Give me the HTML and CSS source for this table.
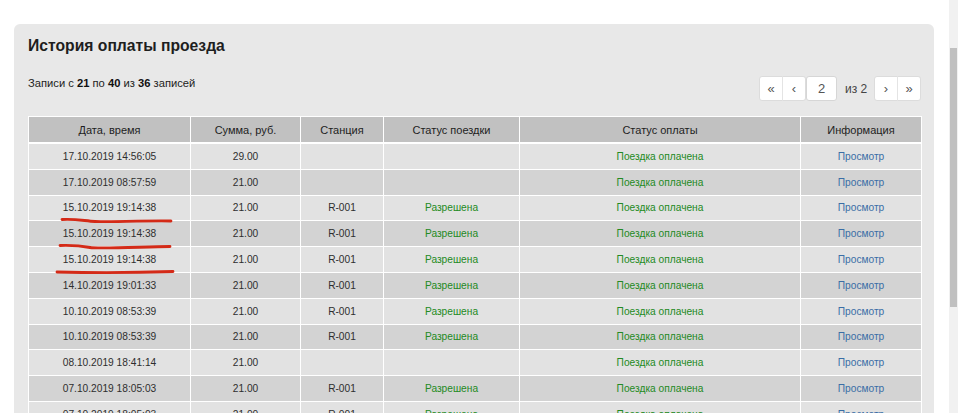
FILE: index.html
```html
<!DOCTYPE html>
<html lang="ru">
<head>
<meta charset="utf-8">
<title>История оплаты проезда</title>
<link rel="stylesheet" href="styles.css">
</head>
<body>
<div class="page">
  <div class="panel">
    <h2 class="title">История оплаты проезда</h2>
    <div class="toolbar">
      <div class="info">Записи с <b>21</b> по <b>40</b> из <b>36</b> записей</div>
      <div class="pager">
        <div class="group">
          <span class="pbtn">&laquo;</span><span class="pbtn">&lsaquo;</span>
        </div>
        <span class="pinput">2</span>
        <span class="pof">из 2</span>
        <div class="group">
          <span class="pbtn">&rsaquo;</span><span class="pbtn">&raquo;</span>
        </div>
      </div>
    </div>
    <table class="grid">
      <colgroup>
        <col class="c1"><col class="c2"><col class="c3"><col class="c4"><col class="c5"><col class="c6">
      </colgroup>
      <thead>
        <tr><th>Дата, время</th><th>Сумма, руб.</th><th>Станция</th><th>Статус поездки</th><th>Статус оплаты</th><th>Информация</th></tr>
      </thead>
      <tbody>
        <tr><td>17.10.2019 14:56:05</td><td>29.00</td><td></td><td></td><td class="ok">Поездка оплачена</td><td class="link">Просмотр</td></tr>
        <tr><td>17.10.2019 08:57:59</td><td>21.00</td><td></td><td></td><td class="ok">Поездка оплачена</td><td class="link">Просмотр</td></tr>
        <tr><td>15.10.2019 19:14:38</td><td>21.00</td><td>R-001</td><td class="ok">Разрешена</td><td class="ok">Поездка оплачена</td><td class="link">Просмотр</td></tr>
        <tr><td>15.10.2019 19:14:38</td><td>21.00</td><td>R-001</td><td class="ok">Разрешена</td><td class="ok">Поездка оплачена</td><td class="link">Просмотр</td></tr>
        <tr><td>15.10.2019 19:14:38</td><td>21.00</td><td>R-001</td><td class="ok">Разрешена</td><td class="ok">Поездка оплачена</td><td class="link">Просмотр</td></tr>
        <tr><td>14.10.2019 19:01:33</td><td>21.00</td><td>R-001</td><td class="ok">Разрешена</td><td class="ok">Поездка оплачена</td><td class="link">Просмотр</td></tr>
        <tr><td>10.10.2019 08:53:39</td><td>21.00</td><td>R-001</td><td class="ok">Разрешена</td><td class="ok">Поездка оплачена</td><td class="link">Просмотр</td></tr>
        <tr><td>10.10.2019 08:53:39</td><td>21.00</td><td>R-001</td><td class="ok">Разрешена</td><td class="ok">Поездка оплачена</td><td class="link">Просмотр</td></tr>
        <tr><td>08.10.2019 18:41:14</td><td>21.00</td><td></td><td></td><td class="ok">Поездка оплачена</td><td class="link">Просмотр</td></tr>
        <tr><td>07.10.2019 18:05:03</td><td>21.00</td><td>R-001</td><td class="ok">Разрешена</td><td class="ok">Поездка оплачена</td><td class="link">Просмотр</td></tr>
        <tr><td>07.10.2019 18:05:03</td><td>21.00</td><td>R-001</td><td class="ok">Разрешена</td><td class="ok">Поездка оплачена</td><td class="link">Просмотр</td></tr>
      </tbody>
    </table>
  </div>
  <svg class="marks" width="960" height="413" viewBox="0 0 960 413">
    <path d="M62 219.5 C75 218.5 85 221 95 221.5 S150 220.5 171 221" />
    <path d="M60 245.5 C75 245 82 246 90 247.5 S140 247 170 246.5" />
    <path d="M57 272 Q115 273.5 173 271.5" />
  </svg>
  <div class="scrollbar"><div class="thumb"></div></div>
</div>
</body>
</html>
```

FILE: styles.css
```css
html, body {
  margin: 0;
  padding: 0;
  background: #ffffff;
  overflow: hidden;
}
body {
  font-family: "Liberation Sans", Arial, sans-serif;
  color: #333;
}
.page {
  position: relative;
  width: 960px;
  height: 413px;
  overflow: hidden;
}
.panel {
  margin: 24px 0 0 14px;
  width: 920px;
  height: 400px;
  box-sizing: border-box;
  background: #e8e8e8;
  border-radius: 6px 6px 0 0;
  padding: 12px 13px 0 14px;
}
.title {
  margin: 0;
  font-size: 15.7px;
  line-height: 20px;
  font-weight: bold;
  color: #1e1e1e;
}
.toolbar {
  display: flex;
  justify-content: space-between;
  align-items: flex-start;
  margin-top: 20px;
  height: 25px;
  margin-bottom: 15px;
}
.info {
  font-size: 11.2px;
  line-height: 14px;
  color: #222;
}
.info b {
  color: #111;
}
.pager {
  display: flex;
  align-items: center;
  height: 25px;
  margin-right: 0;
}
.group {
  display: flex;
}
.pbtn {
  width: 24px;
  height: 25px;
  box-sizing: border-box;
  background: #fff;
  border: 1px solid #dcdcdc;
  display: flex;
  align-items: center;
  justify-content: center;
  font-size: 13px;
  color: #555;
}
.group .pbtn + .pbtn {
  border-left: 1px solid #e4e4e4;
  margin-left: -1px;
}
.group .pbtn:first-child {
  border-radius: 3px 0 0 3px;
}
.group .pbtn:last-child {
  border-radius: 0 3px 3px 0;
}
.pinput {
  width: 31px;
  height: 25px;
  box-sizing: border-box;
  background: #fff;
  border: 1px solid #d6d6d6;
  border-radius: 3px;
  display: flex;
  align-items: center;
  justify-content: center;
  font-size: 13px;
  color: #555;
}
.pof {
  font-size: 12px;
  color: #444;
  margin: 0 6px 0 8px;
  width: 23px;
}
.grid {
  width: 893px;
  border-collapse: collapse;
  table-layout: fixed;
  font-size: 10.2px;
}
.c1 { width: 162px; }
.c2 { width: 110px; }
.c3 { width: 83px; }
.c4 { width: 136px; }
.c5 { width: 281px; }
.c6 { width: 121px; }
.grid th, .grid td {
  border: 1px solid #ffffff;
  text-align: center;
  padding: 0;
  white-space: nowrap;
}
.grid th {
  height: 25px;
  background: #c1c1c1;
  font-size: 11px;
  font-weight: normal;
  color: #1e1e1e;
  border-bottom-width: 2px;
}
.grid td {
  height: 24.8px;
  color: #2e2e2e;
}
.grid tbody tr:nth-child(odd) td {
  background: #e2e2e2;
}
.grid tbody tr:nth-child(even) td {
  background: #d3d3d3;
}
.grid td.ok {
  color: #238a23;
}
.grid td.link {
  color: #3a6ea6;
}
.marks {
  position: absolute;
  left: 0;
  top: 0;
  pointer-events: none;
}
.marks path {
  fill: none;
  stroke: #d42a17;
  stroke-width: 2.8;
  stroke-linecap: round;
}
.scrollbar {
  position: absolute;
  left: 949px;
  top: 0;
  width: 9px;
  height: 413px;
  background: #f1f1f1;
}
.thumb {
  position: absolute;
  left: 1px;
  top: 48px;
  width: 7px;
  height: 259px;
  background: #c0c0c0;
}
```
